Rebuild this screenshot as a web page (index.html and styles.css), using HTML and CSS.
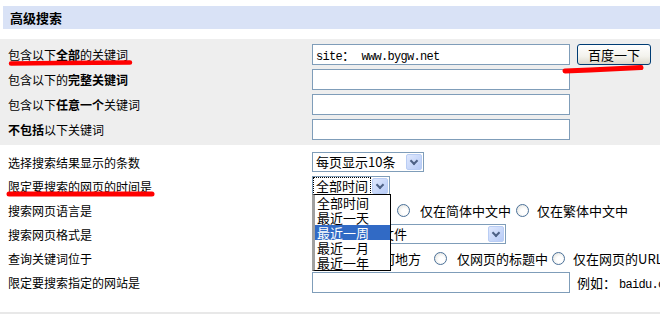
FILE: index.html
```html
<!DOCTYPE html>
<html lang="zh-CN">
<head>
<meta charset="utf-8">
<title>高级搜索</title>
<link rel="stylesheet" href="styles.css">
</head>
<body>
<div class="page">
  <div class="header">高级搜索</div>
  <div class="gray">
    <div class="row">
      <div class="label">包含以下<b>全部</b>的关键词</div>
      <div class="field">
        <div class="textbox">site<span class="fw">：</span> www.bygw.net</div>
        <div class="button">百度一下</div>
      </div>
    </div>
    <div class="row">
      <div class="label">包含以下的<b>完整关键词</b></div>
      <div class="field"><div class="textbox"></div></div>
    </div>
    <div class="row">
      <div class="label">包含以下<b>任意一个</b>关键词</div>
      <div class="field"><div class="textbox"></div></div>
    </div>
    <div class="row">
      <div class="label"><b>不包括</b>以下关键词</div>
      <div class="field"><div class="textbox"></div></div>
    </div>
  </div>
  <div class="lower">
    <div class="row2">
      <div class="label">选择搜索结果显示的条数</div>
      <div class="field">
        <div class="select s-count"><span class="sel-text">每页显示10条</span><span class="arrow"></span></div>
      </div>
    </div>
    <div class="row2">
      <div class="label">限定要搜索的网页的时间是</div>
      <div class="field">
        <div class="select s-time"><span class="sel-text focus">全部时间</span><span class="arrow"></span></div>
      </div>
    </div>
    <div class="row2">
      <div class="label">搜索网页语言是</div>
      <div class="field radios">
        <span class="radio"></span><span class="rtext r-all">全部语言</span>
        <span class="radio"></span><span class="rtext r-mid">仅在简体中文中</span>
        <span class="radio"></span><span class="rtext">仅在繁体中文中</span>
      </div>
    </div>
    <div class="row2">
      <div class="label">搜索网页格式是</div>
      <div class="field">
        <div class="select s-format"><span class="sel-text">所有网页和文件</span><span class="arrow"></span></div>
      </div>
    </div>
    <div class="row2">
      <div class="label">查询关键词位于</div>
      <div class="field radios">
        <span class="radio"></span><span class="rtext r-any">网页的任何地方</span>
        <span class="radio"></span><span class="rtext r-title">仅网页的标题中</span>
        <span class="radio"></span><span class="rtext">仅在网页的URL中</span>
      </div>
    </div>
    <div class="row2">
      <div class="label">限定要搜索指定的网站是</div>
      <div class="field">
        <div class="textbox"></div>
        <div class="example">例如： <span class="mono">baidu.com</span></div>
      </div>
    </div>
  </div>
  <div class="footer"></div>

  <div class="dropdown">
    <div class="opt">全部时间</div>
    <div class="opt">最近一天</div>
    <div class="opt sel">最近一周</div>
    <div class="opt">最近一月</div>
    <div class="opt">最近一年</div>
  </div>

  <svg class="marks" width="660" height="314" viewBox="0 0 660 314">
    <path d="M11 63.5 L60 63 L130 62.5" stroke="#ff0000" stroke-width="4.5" stroke-linecap="round" fill="none"/>
    <path d="M565 71 L590 70 L641 67.5" stroke="#ff0000" stroke-width="5" stroke-linecap="round" fill="none"/>
    <path d="M9 194 L80 194 L152 194" stroke="#ff0000" stroke-width="5" stroke-linecap="round" fill="none"/>
  </svg>
</div>
</body>
</html>
```
FILE: styles.css
```css
html, body {
  margin: 0;
  padding: 0;
  background: #ffffff;
}
body {
  font-family: "Noto Sans CJK SC", "Liberation Sans", sans-serif;
  font-size: 12px;
  color: #000000;
}
.page {
  position: relative;
  width: 660px;
  height: 314px;
  overflow: hidden;
}
.header {
  margin: 6px 0 0 3px;
  height: 23px;
  line-height: 23px;
  padding-left: 7px;
  background: #d9e2f6;
  font-weight: bold;
  font-size: 13px;
}
.gray {
  margin-top: 10px;
  background: #eeeeee;
  padding: 5px 0 1px;
}
.row {
  display: flex;
  align-items: flex-start;
  height: 25px;
}
.row .label {
  padding-top: 2px;
  line-height: 17px;
}
.label {
  width: 312px;
  padding-left: 8px;
  box-sizing: border-box;
  flex: none;
  white-space: nowrap;
}
.label b {
  font-weight: bold;
}
.field {
  display: flex;
  align-items: center;
  white-space: nowrap;
}
.textbox {
  width: 258px;
  height: 21px;
  box-sizing: border-box;
  border: 1px solid #7f9db9;
  background: #ffffff;
  font-family: "Liberation Mono", monospace;
  font-size: 12px;
  letter-spacing: -0.7px;
  line-height: 19px;
  padding-left: 3px;
}
.textbox .fw {
  font-family: "Noto Sans CJK SC", sans-serif;
  font-size: 13px;
  letter-spacing: 0;
}
.button {
  margin-left: 7px;
  width: 74px;
  height: 21px;
  box-sizing: border-box;
  border: 1px solid #003c74;
  border-radius: 3px;
  background: linear-gradient(#ffffff, #f3f2ec 60%, #dcd9cc);
  font-size: 13px;
  line-height: 19px;
  text-align: center;
}
.lower {
  padding-top: 5px;
  height: 162px;
}
.row2 {
  display: flex;
  align-items: center;
  height: 24px;
}
.select {
  position: relative;
  display: flex;
  align-items: center;
  height: 20px;
  box-sizing: border-box;
  border: 1px solid #7f9db9;
  background: #ffffff;
  font-size: 13px;
}
.s-count { width: 112px; }
.s-time { width: 78px; }
.s-format { width: 194px; }
.sel-text {
  flex: 1;
  padding-left: 3px;
  line-height: 16px;
  height: 16px;
}
.sel-text.focus {
  margin-left: 1px;
  padding-left: 2px;
  outline: 1px dotted #000000;
  outline-offset: 0;
  margin-right: 2px;
}
.arrow {
  flex: none;
  width: 16px;
  height: 16px;
  margin-right: 1px;
  box-sizing: border-box;
  border: 1px solid #b9cdf4;
  border-radius: 2px;
  background: linear-gradient(135deg, #dfe8fd, #b7cbf7);
  position: relative;
}
.arrow::after {
  content: "";
  position: absolute;
  left: 4px;
  top: 3px;
  width: 4px;
  height: 4px;
  border-right: 2px solid #4d6185;
  border-bottom: 2px solid #4d6185;
  transform: rotate(45deg);
}
.radios {
  font-size: 13px;
}
.radio {
  flex: none;
  width: 13px;
  height: 13px;
  box-sizing: border-box;
  border: 1px solid #4b7199;
  border-radius: 50%;
  background: radial-gradient(circle at 60% 60%, #ffffff 30%, #dcdcd6 100%);
  margin-left: 1px;
}
.rtext {
  margin-left: 4px;
  margin-right: 6px;
}
.r-all { margin-right: 15px; }
.r-mid { margin-right: 5px; }
.r-any { margin-right: 13px; }
.r-title { margin-right: 4px; }
.rtext + .radio { margin-left: 0; }
.radios .rtext:nth-child(4) { margin-left: 10px; }
.radios .rtext:nth-child(6) { margin-left: 8px; }
.example {
  margin-left: 7px;
  font-size: 13px;
}
.example .mono {
  font-family: "Liberation Mono", monospace;
  font-size: 12px;
  letter-spacing: -0.7px;
}
.footer {
  height: 2px;
  margin-top: 0;
  background: #e8e8e8;
}
.dropdown {
  position: absolute;
  left: 312px;
  top: 194px;
  width: 79px;
  box-sizing: border-box;
  border: 1px solid #000000;
  border-left: 3px solid #a0a0a0;
  background: #ffffff;
  font-size: 13px;
}
.opt {
  height: 15px;
  line-height: 15px;
  padding-left: 2px;
}
.opt.sel {
  background: #316ac5;
  color: #ffffff;
}
.marks {
  position: absolute;
  left: 0;
  top: 0;
  pointer-events: none;
}
```
